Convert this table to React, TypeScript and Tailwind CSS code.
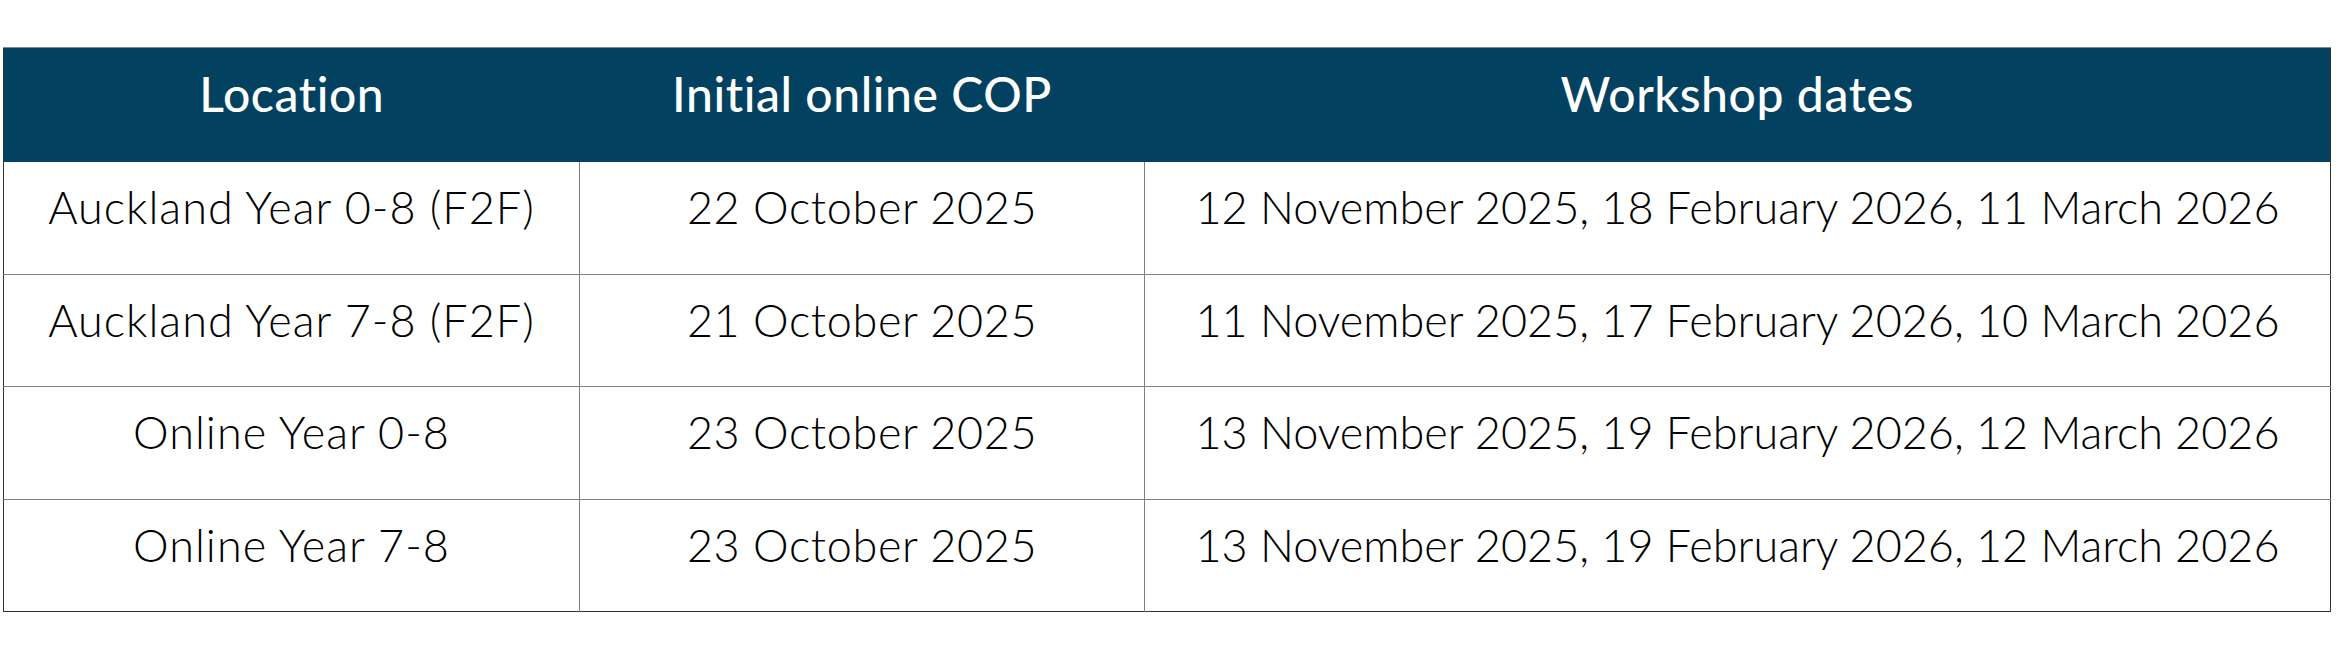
import React from "react";

const rows = [
  ["Auckland Year 0-8 (F2F)", "22 October 2025", "12 November 2025, 18 February 2026, 11 March 2026"],
  ["Auckland Year 7-8 (F2F)", "21 October 2025", "11 November 2025, 17 February 2026, 10 March 2026"],
  ["Online Year 0-8", "23 October 2025", "13 November 2025, 19 February 2026, 12 March 2026"],
  ["Online Year 7-8", "23 October 2025", "13 November 2025, 19 February 2026, 12 March 2026"],
];

const colTrack = ["tracking-[1px]", "tracking-[0.6px]", "tracking-[0px]"];

export default function App() {
  return (
    <div className="w-[2351px] h-[665px] bg-white pt-[47px] pl-[3px]" style={{ fontFamily: "Lato, 'Liberation Sans', sans-serif" }}>
      <table className="border-collapse table-fixed w-[2327px] border border-[#333]">
        <colgroup>
          <col className="w-[576px]" />
          <col className="w-[565px]" />
          <col className="w-[1186px]" />
        </colgroup>
        <thead>
          <tr className="bg-[#024260] text-white h-[114px]">
            <th className="font-medium text-[48px] tracking-[0.6px] text-center align-middle pb-[22px] border-t border-[#888]">Location</th>
            <th className="font-medium text-[48px] tracking-[0.6px] text-center align-middle pb-[22px] border-t border-[#888]">Initial online COP</th>
            <th className="font-medium text-[48px] tracking-[0.6px] text-center align-middle pb-[22px] border-t border-[#888]">Workshop dates</th>
          </tr>
        </thead>
        <tbody>
          {rows.map((r, i) => (
            <tr key={i} className="h-[112.5px] text-black">
              {r.map((c, j) => (
                <td key={j} className={`text-center align-middle font-light text-[45px] pb-[20px] border-[#808080] ${colTrack[j]} ${i < rows.length - 1 ? "border-b-[1.5px]" : ""} ${j > 0 ? "border-l-[1.5px]" : ""}`}>
                  {c}
                </td>
              ))}
            </tr>
          ))}
        </tbody>
      </table>
    </div>
  );
}
